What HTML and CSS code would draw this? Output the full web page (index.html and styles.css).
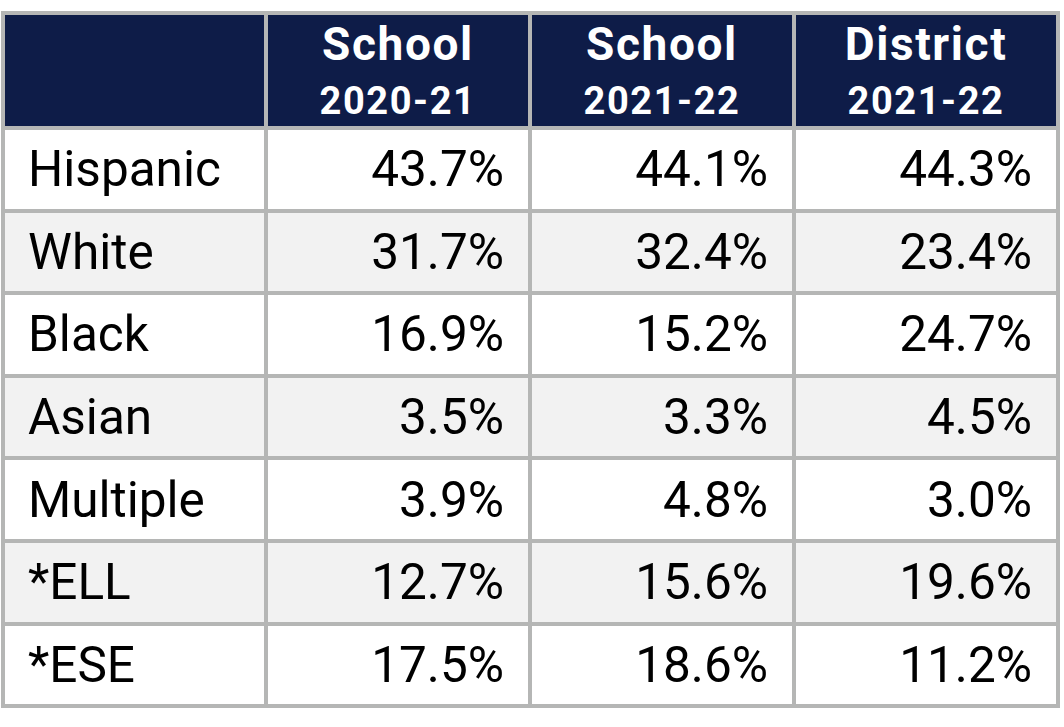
FILE: index.html
```html
<!DOCTYPE html>
<html lang="en">
<head>
<meta charset="utf-8">
<title>Demographics</title>
<link rel="stylesheet" href="styles.css">
</head>
<body>
<div class="table">
  <div class="hcell"></div>
  <div class="hcell"><span class="h1">School</span><span class="h2">2020-21</span></div>
  <div class="hcell"><span class="h1">School</span><span class="h2">2021-22</span></div>
  <div class="hcell"><span class="h1">District</span><span class="h2">2021-22</span></div>

  <div class="cell label">Hispanic</div><div class="cell num">43.7%</div><div class="cell num">44.1%</div><div class="cell num">44.3%</div>
  <div class="cell label alt">White</div><div class="cell num alt">31.7%</div><div class="cell num alt">32.4%</div><div class="cell num alt">23.4%</div>
  <div class="cell label">Black</div><div class="cell num">16.9%</div><div class="cell num">15.2%</div><div class="cell num">24.7%</div>
  <div class="cell label alt">Asian</div><div class="cell num alt">3.5%</div><div class="cell num alt">3.3%</div><div class="cell num alt">4.5%</div>
  <div class="cell label">Multiple</div><div class="cell num">3.9%</div><div class="cell num">4.8%</div><div class="cell num">3.0%</div>
  <div class="cell label alt">*ELL</div><div class="cell num alt">12.7%</div><div class="cell num alt">15.6%</div><div class="cell num alt">19.6%</div>
  <div class="cell label">*ESE</div><div class="cell num">17.5%</div><div class="cell num">18.6%</div><div class="cell num">11.2%</div>
</div>
</body>
</html>
```
FILE: styles.css
```css
html, body {
  margin: 0;
  padding: 0;
  background: #ffffff;
}
body {
  padding: 11px 0 0 1px;
  font-family: Roboto, "Liberation Sans", sans-serif;
}
.table {
  display: grid;
  grid-template-columns: 259px 260px 260px 260px;
  grid-template-rows: 111px repeat(7, 78.6px);
  gap: 4px;
  padding: 4px;
  background: #b5b6b5;
  width: max-content;
}
.hcell {
  background: #0e1c48;
  color: #ffffff;
  font-weight: 700;
  text-align: center;
  padding-top: 2px;
  box-sizing: border-box;
}
.h1 {
  display: block;
  font-size: 46px;
  line-height: 54px;
  letter-spacing: 1.6px;
}
.h2 {
  display: block;
  font-size: 38px;
  line-height: 44px;
  margin-top: 8px;
  letter-spacing: 1.6px;
}
.cell {
  background: #ffffff;
  color: #000000;
  font-size: 49.5px;
  display: flex;
  align-items: center;
}
.cell.alt {
  background: #f2f2f2;
}
.label {
  padding-left: 23px;
}
.num {
  justify-content: flex-end;
  padding-right: 24px;
}
```
